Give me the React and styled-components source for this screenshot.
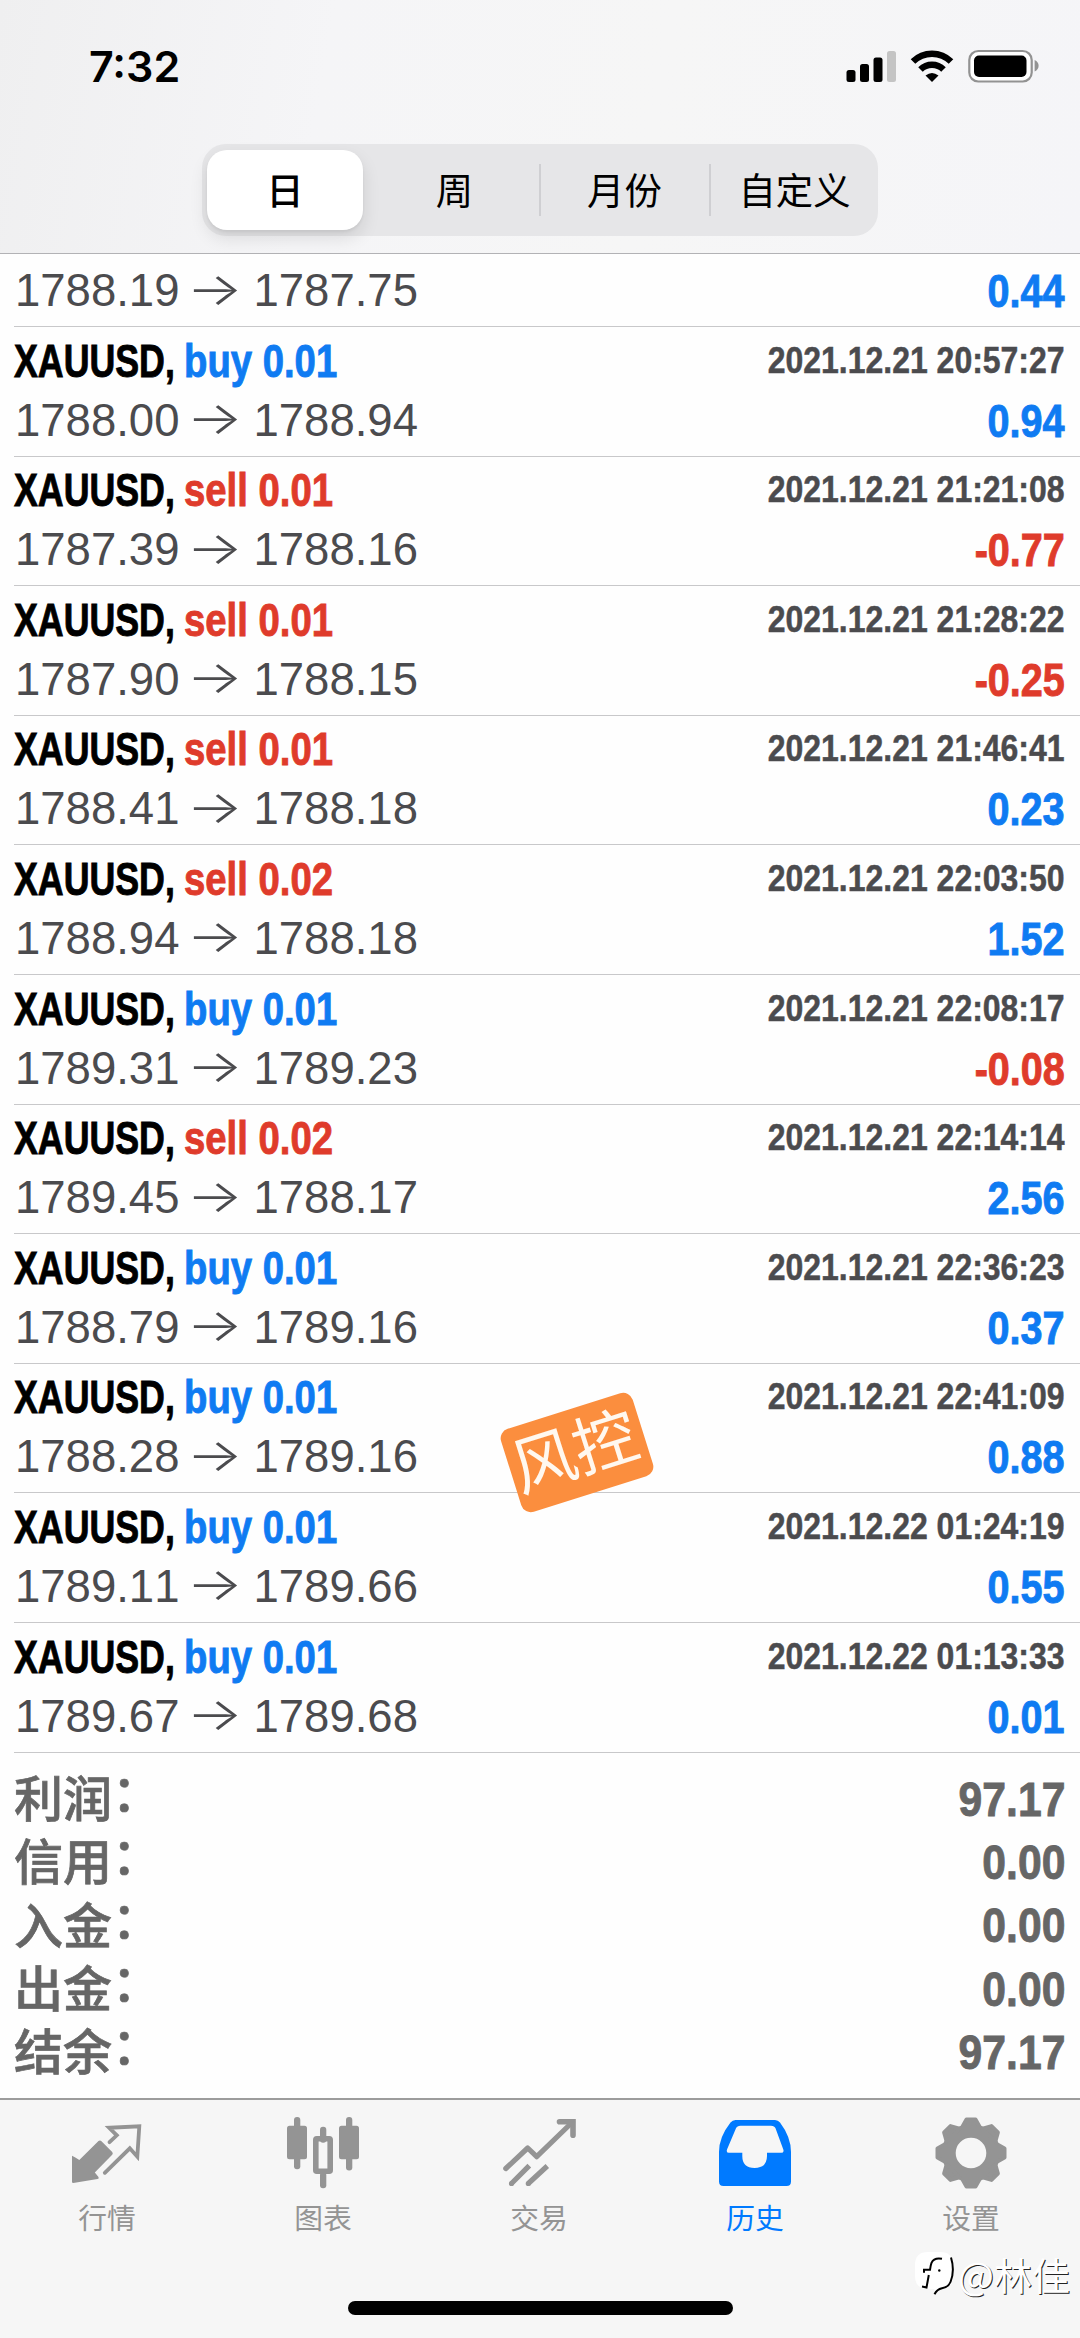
import styled, { createGlobalStyle } from 'styled-components'

const GlobalStyle = createGlobalStyle`
    * {
        box-sizing: border-box;
    }

    body {
        margin: 0;
        background: #fefefe;
        font-family: "Liberation Sans", "Noto Sans CJK SC", sans-serif;
    }
`;

const Screen = styled.div`
    position: relative;
    display: flex;
    flex-direction: column;
    width: 1080px;
    height: 2338px;
    overflow: hidden;
    background: #fefefe;
`;

const Header = styled.header`
    display: flex;
    flex-direction: column;
    height: 254px;
    border-bottom: 1.5px solid #b2b2b5;
    background: linear-gradient(100deg, #efeff0 0%, #f5f5f7 30%, #f6f6f6 60%, #f5f5f8 100%);
`;

const StatusBar = styled.div`
    display: flex;
    align-items: center;
    justify-content: space-between;
    height: 144px;
    padding: 0 41px 12px 89px;
`;

const Clock = styled.span`
    font-family: Inter, sans-serif;
    font-size: 43px;
    font-weight: 600;
    line-height: 52px;
`;

const Segments = styled.div`
    display: flex;
    align-items: center;
    width: 676px;
    height: 92px;
    margin: 0 auto;
    padding: 0 5px;
    border-radius: 24px;
    background: #e6e6e8;
`;

const Segment = styled.button`
    flex: none;
    width: ${({ $active }) => ($active ? '156px' : '170px')};
    height: 80px;
    margin-right: ${({ $active }) => ($active ? '6.5px' : '0')};
    padding: 0 0 3px;
    border: 0;
    border-radius: 20px;
    background: ${({ $active }) => ($active ? '#ffffff' : 'transparent')};
    box-shadow: ${({ $active }) => ($active ? '0 8px 18px rgba(0, 0, 0, 0.11), 0 2px 3px rgba(0, 0, 0, 0.06)' : 'none')};
    color: #000000;
    font-family: "Noto Sans CJK SC", sans-serif;
    font-size: 37.4px;
    font-weight: ${({ $active }) => ($active ? 500 : 400)};
    line-height: 76px;
`;

const Divider = styled.i`
    flex: none;
    width: 2px;
    height: 52px;
    margin: 0 -1px;
    background: #cfcfd2;
`;

const Deals = styled.ul`
    height: 1499px;
    margin: 0;
    padding: 0;
    overflow: hidden;
    list-style: none;
`;

const DealRow = styled.li`
    display: flex;
    flex-direction: column;
    justify-content: flex-end;
    height: ${({ $scrolled }) => ($scrolled ? '73px' : '129.6px')};
    margin-left: 14px;
    padding: 0 15px 5px 0;
    border-bottom: 1.5px solid #c8c8ca;
`;

const Line = styled.div`
    display: flex;
    flex: none;
    align-items: center;
    justify-content: space-between;
    height: 60px;
`;

// the bold face is squeezed horizontally, $squeeze is the ratio
const Condensed = styled.span`
    display: inline-block;
    margin: 0;
    font-size: 46px;
    font-weight: 700;
    line-height: 54px;
    white-space: pre;
    transform: scaleX(${({ $squeeze }) => $squeeze || 0.86});
    transform-origin: ${({ $from }) => $from || 'right'} center;
    -webkit-text-stroke: 0.9px currentColor;
`;

const Title = styled.span`
    display: flex;
`;

const Symbol = styled(Condensed)`
    width: 170px;
    color: #000000;
`;

const Side = styled(Condensed)`
    color: ${({ $side }) => ($side === 'buy' ? '#0f7bf2' : '#df3b2b')};
`;

const Time = styled(Condensed)`
    font-size: 37px;
    color: #4b4b4e;
    -webkit-text-stroke-width: 0.5px;
`;

const Profit = styled(Condensed)`
    color: ${({ $loss }) => ($loss ? '#df3b2b' : '#0f7bf2')};
`;

const Prices = styled.span`
    display: flex;
    align-items: center;
    padding-left: 1px;
    color: #4b4b4e;
    font-size: 45.5px;
    font-kerning: none;
    line-height: 54px;
`;

const Arrow = styled.span`
    width: 74px;
    padding: 0 2px 5px 0;
    font-family: Inter, sans-serif;
    font-weight: 300;
    text-align: center;
    transform: scaleX(1.3);
`;

const Summary = styled.dl`
    flex: 1;
    margin: 0;
    padding: 14px 15px 0 14px;
`;

const SummaryRow = styled.div`
    display: flex;
    align-items: center;
    justify-content: space-between;
    height: 63.3px;
    color: #666666;
`;

const SummaryLabel = styled.dt`
    padding-bottom: 10px;
    font-family: "Noto Sans CJK SC", sans-serif;
    font-size: 49px;
    font-weight: 500;
    line-height: 53px;
    -webkit-text-stroke: 0.7px #666666;
`;

const Colon = styled.span`
    line-height: 1;
    vertical-align: 6px;
`;

const SummaryValue = styled(Condensed)`
    font-size: 48.5px;
`;

const TabBar = styled.nav`
    display: flex;
    height: 240px;
    padding-top: 17px;
    border-top: 2px solid #9c9c9c;
    background: #f6f6f6;
`;

const Tab = styled.a`
    display: flex;
    flex: 1;
    flex-direction: column;
    align-items: center;
    color: ${({ $active }) => ($active ? '#007aff' : '#949494')};
`;

const TabLabel = styled.span`
    margin-top: 8px;
    padding-right: 2px;
    font-family: "Noto Sans CJK SC", sans-serif;
    font-size: 28.8px;
    line-height: 36px;
`;

const HomeIndicator = styled.div`
    position: absolute;
    bottom: 23px;
    left: 348px;
    width: 385px;
    height: 14px;
    border-radius: 7px;
    background: #000000;
`;

const Sticker = styled.div`
    position: absolute;
    top: 1409px;
    left: 508px;
    width: 138px;
    height: 87px;
    padding-right: 4px;
    border-radius: 10px;
    background: #fb8e3e;
    color: #fff8ef;
    font-family: "Noto Sans CJK SC", sans-serif;
    font-size: 64px;
    line-height: 74px;
    text-align: center;
    transform: rotate(-17.5deg);
`;

const Watermark = styled.div`
    position: absolute;
    right: 10px;
    bottom: 40px;
    display: flex;
    align-items: center;
    gap: 3px;
    color: #ffffff;
    font-family: "Noto Sans CJK SC", sans-serif;
    font-size: 38px;
    line-height: 48px;
    text-shadow: 1px 1px 0 #222222;
`;

const deals = [
    { open: '1788.19', close: '1787.75', profit: '0.44' },
    { side: 'buy', volume: '0.01', time: '2021.12.21 20:57:27', open: '1788.00', close: '1788.94', profit: '0.94' },
    { side: 'sell', volume: '0.01', time: '2021.12.21 21:21:08', open: '1787.39', close: '1788.16', profit: '-0.77' },
    { side: 'sell', volume: '0.01', time: '2021.12.21 21:28:22', open: '1787.90', close: '1788.15', profit: '-0.25' },
    { side: 'sell', volume: '0.01', time: '2021.12.21 21:46:41', open: '1788.41', close: '1788.18', profit: '0.23' },
    { side: 'sell', volume: '0.02', time: '2021.12.21 22:03:50', open: '1788.94', close: '1788.18', profit: '1.52' },
    { side: 'buy', volume: '0.01', time: '2021.12.21 22:08:17', open: '1789.31', close: '1789.23', profit: '-0.08' },
    { side: 'sell', volume: '0.02', time: '2021.12.21 22:14:14', open: '1789.45', close: '1788.17', profit: '2.56' },
    { side: 'buy', volume: '0.01', time: '2021.12.21 22:36:23', open: '1788.79', close: '1789.16', profit: '0.37' },
    { side: 'buy', volume: '0.01', time: '2021.12.21 22:41:09', open: '1788.28', close: '1789.16', profit: '0.88' },
    { side: 'buy', volume: '0.01', time: '2021.12.22 01:24:19', open: '1789.11', close: '1789.66', profit: '0.55' },
    { side: 'buy', volume: '0.01', time: '2021.12.22 01:13:33', open: '1789.67', close: '1789.68', profit: '0.01' },
]

const totals = [
    ['利润', '97.17'],
    ['信用', '0.00'],
    ['入金', '0.00'],
    ['出金', '0.00'],
    ['结余', '97.17'],
]

function StatusIcons () {
    return (
        <svg width="193" height="34" viewBox="846 49 193 34">
            <rect x="846.5" y="70" width="9" height="12" rx="2.5" />
            <rect x="860" y="64" width="9" height="18" rx="2.5" />
            <rect x="873.5" y="57.5" width="9" height="24.5" rx="2.5" />
            <rect x="887" y="51" width="9" height="31" rx="2.5" fill="#c4c4c4" />
            <path d="M913 61.5a27 27 0 0 1 38 0M920.5 69.5a16.5 16.5 0 0 1 23 0" fill="none" stroke="#000" strokeWidth="6.5" />
            <path d="M925.5 75.5q6.5-5 13 0L932 82z" />
            <rect x="969.3" y="51" width="62.4" height="30.5" rx="9" fill="#fff" stroke="#929292" strokeWidth="2.2" />
            <rect x="974" y="55.5" width="52.5" height="21.5" rx="5" />
            <path d="M1034.6 60q4 2 4 5.8t-4 5.8z" fill="#929292" />
        </svg>
    )
}

function QuotesIcon () {
    return (
        <svg width="76" height="74" viewBox="0 0 76 74" fill="none" stroke="currentColor" strokeWidth="3.8">
            <path d="M39.5 25.2l7.3-6.9-7.7-7.5 30.2-1.5-2 30.4-7.5-8.4-25 24.5" strokeLinecap="round" />
            <path d="M2 38.7q3 1.2 7.3 4.3L28.5 24q1.5-1.3 3 .2l10.700 10.900q1.200 1.400 0 2.700L24.800 55.500l3.700 4.500q.8 1.800-1 2L3.300 66 2 65.500z" fill="currentColor" stroke="none" />
        </svg>
    )
}

function ChartIcon () {
    return (
        <svg width="76" height="74" viewBox="0 0 76 74" fill="currentColor">
            <rect x="8" width="6.3" height="52.3" rx="3" />
            <rect x="1" y="8.7" width="20" height="33.6" rx="2.5" />
            <rect x="34" y="9.7" width="6.3" height="16" rx="3" />
            <rect x="34" y="55" width="6.3" height="16.3" rx="3" />
            <rect x="29.8" y="21.8" width="14.4" height="32.4" rx="1" fill="none" stroke="currentColor" strokeWidth="5.6" strokeLinejoin="round" />
            <rect x="60" width="6.3" height="53.5" rx="3" />
            <rect x="53" y="8.7" width="20" height="33.6" rx="2.5" />
        </svg>
    )
}

function TradeIcon () {
    return (
        <svg width="76" height="74" viewBox="0 0 76 74" fill="none" stroke="currentColor" strokeWidth="5.2">
            <path d="M3.8 51.5L25.700 31l9 8.700L70.500 5" strokeLinecap="round" strokeLinejoin="round" />
            <path d="M57.5 4.7H71v13.500" strokeWidth="5.6" strokeLinecap="round" />
            <path d="M9.5 66.5l17.800-17.800M26.300 66.500l19-17.500" />
            <path d="M9.5 66.5h.01M26.3 66.500h.01" strokeLinecap="round" />
        </svg>
    )
}

function HistoryIcon () {
    return (
        <svg width="76" height="74" viewBox="0 0 76 74" fill="currentColor">
            <path fillRule="evenodd" d="M17.500 3H57q3 0 5 2.500Q73 20 73 35v29.500q0 4.500-4.500 4.500h-63Q1 69 1 64.500V35Q1 20 12.500 5.500 14.500 3 17.500 3zM22.500 8.700q-3.500 0-4.500 2.500L9 32.500q-1 3.300 2 3.300h13.300V39q0 12 12.300 12T49 39v-3.200h14.300q3 0 2-3.300L57.500 11.200q-1-2.500-4.500-2.500z" />
        </svg>
    )
}

function GearIcon () {
    return (
        <svg width="76" height="74" viewBox="0 0 76 74" fill="currentColor">
            <circle cx="37" cy="36" r="22.2" fill="none" stroke="currentColor" strokeWidth="13.8" />
            {[0, 45, 90, 135, 180, 225, 270, 315].map((angle) => (
                <path
                    key={angle}
                    d="M28 10.5l4.5-8h9l4.5 8z"
                    stroke="currentColor"
                    strokeWidth="4"
                    strokeLinejoin="round"
                    transform={`rotate(${angle} 37 36)`}
                />
            ))}
        </svg>
    )
}

function WatermarkLogo () {
    return (
        <svg width="40" height="46" viewBox="0 0 40 46">
            <path d="M13 1h12q13 0 13 13v11q0 12-10 13-6 1-8.500 6v-6H13Q0 38 0 25V14Q0 1 13 1z" fill="#fff" />
            <path d="M36 6.500q4 13-.5 24.500-2 5-8.500 6.200-5 1-7.500 6" fill="none" stroke="#000" strokeWidth="2" />
            <path d="M27 7.800q-8-1.500-10.500 4-.8 2-1.500 7H9v3M13.800 24l-2.300 12.500-4.500-1" fill="none" stroke="#000" strokeWidth="2" />
            <circle cx="24.3" cy="19.5" r="1.2" fill="#000" />
        </svg>
    )
}

const tabs = [
    { label: '行情', Icon: QuotesIcon },
    { label: '图表', Icon: ChartIcon },
    { label: '交易', Icon: TradeIcon },
    { label: '历史', Icon: HistoryIcon, active: true },
    { label: '设置', Icon: GearIcon },
]

function Deal ({ deal }) {
    return (
        <DealRow $scrolled={!deal.time}>
            {deal.time && (
                <Line>
                    <Title>
                        <Symbol $squeeze={0.777} $from="left">XAUUSD,</Symbol>
                        <Side $squeeze={0.832} $from="left" $side={deal.side}>{deal.side} {deal.volume}</Side>
                    </Title>
                    <Time $squeeze={0.864}>{deal.time}</Time>
                </Line>
            )}
            <Line>
                <Prices>
                    {deal.open}
                    <Arrow>→</Arrow>
                    {deal.close}
                </Prices>
                <Profit $loss={deal.profit.startsWith('-')}>{deal.profit}</Profit>
            </Line>
        </DealRow>
    )
}

function App () {
    return (
        <Screen>
            <GlobalStyle />
            <Header>
                <StatusBar>
                    <Clock>7:32</Clock>
                    <StatusIcons />
                </StatusBar>
                <Segments>
                    <Segment $active>日</Segment>
                    <Segment>周</Segment>
                    <Divider />
                    <Segment>月份</Segment>
                    <Divider />
                    <Segment>自定义</Segment>
                </Segments>
            </Header>
            <Deals>
                {deals.map((deal, index) => (
                    <Deal key={index} deal={deal} />
                ))}
            </Deals>
            <Summary>
                {totals.map(([label, value]) => (
                    <SummaryRow key={label}>
                        <SummaryLabel>{label}<Colon>：</Colon></SummaryLabel>
                        <SummaryValue as="dd" $squeeze={0.88}>{value}</SummaryValue>
                    </SummaryRow>
                ))}
            </Summary>
            <TabBar>
                {tabs.map(({ label, Icon, active }) => (
                    <Tab key={label} $active={active}>
                        <Icon />
                        <TabLabel>{label}</TabLabel>
                    </Tab>
                ))}
            </TabBar>
            <HomeIndicator />
            <Sticker>风控</Sticker>
            <Watermark>
                <WatermarkLogo />
                @林佳
            </Watermark>
        </Screen>
    )
}

export default App
